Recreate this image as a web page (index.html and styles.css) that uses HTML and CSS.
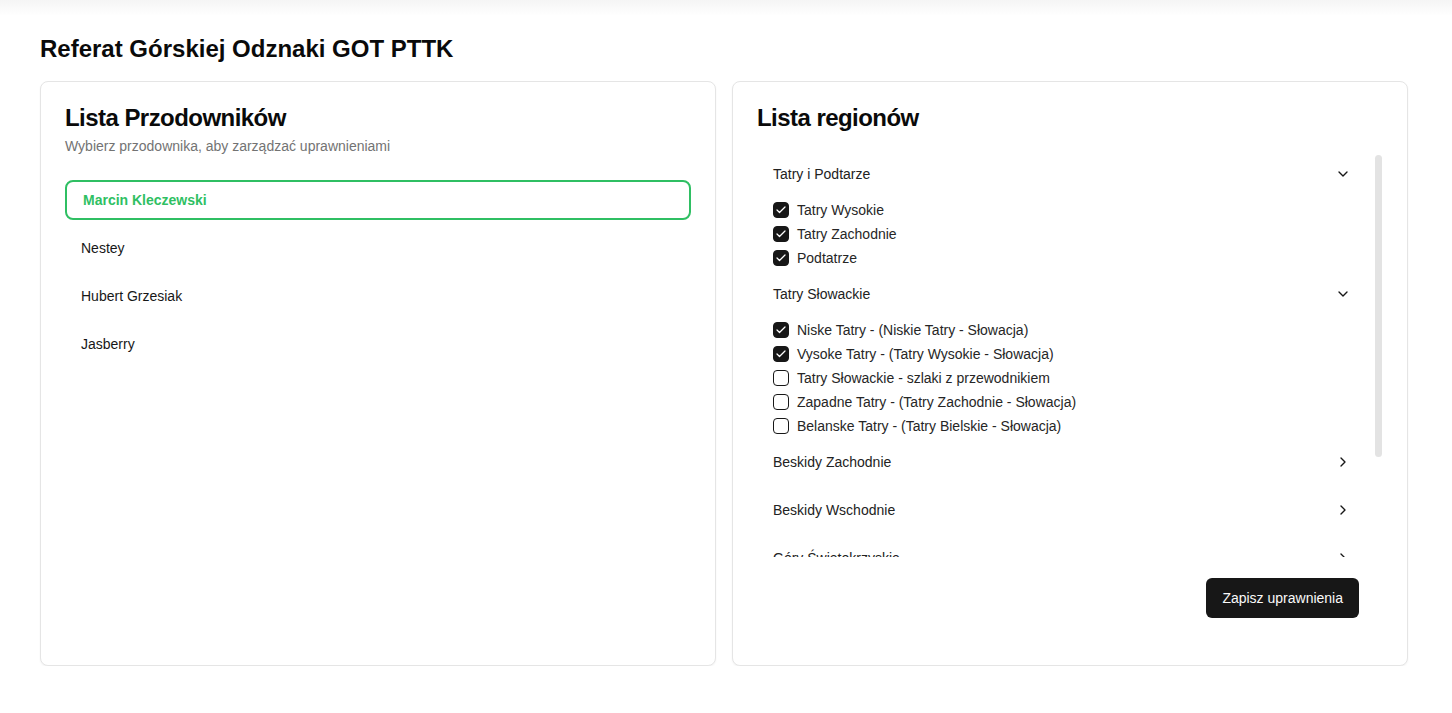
FILE: index.html
```html
<!DOCTYPE html>
<html lang="pl">
<head>
<meta charset="utf-8">
<title>Referat Górskiej Odznaki GOT PTTK</title>
<link rel="stylesheet" href="styles.css">
</head>
<body>
<div class="topbar"></div>
<main class="page">
  <h1 class="page-title">Referat Górskiej Odznaki GOT PTTK</h1>
  <div class="grid">
    <section class="card">
      <div class="card-header">
        <h2 class="card-title">Lista Przodowników</h2>
        <p class="card-desc">Wybierz przodownika, aby zarządzać uprawnieniami</p>
      </div>
      <div class="card-content">
        <ul class="guide-list">
          <li class="guide selected">Marcin Kleczewski</li>
          <li class="guide">Nestey</li>
          <li class="guide">Hubert Grzesiak</li>
          <li class="guide">Jasberry</li>
        </ul>
      </div>
    </section>
    <section class="card">
      <div class="card-header regions-header">
        <h2 class="card-title">Lista regionów</h2>
      </div>
      <div class="card-content regions-content">
        <div class="scroll">
          <div class="acc-list">
            <div class="acc-item">
              <div class="acc-head"><span>Tatry i Podtarze</span>
                <svg class="chev" viewBox="0 0 24 24"><path d="m6 9 6 6 6-6"/></svg></div>
              <div class="acc-body">
                <label class="row"><span class="cb checked"><svg viewBox="0 0 24 24"><path d="M20 6 9 17l-5-5"/></svg></span>Tatry Wysokie</label>
                <label class="row"><span class="cb checked"><svg viewBox="0 0 24 24"><path d="M20 6 9 17l-5-5"/></svg></span>Tatry Zachodnie</label>
                <label class="row"><span class="cb checked"><svg viewBox="0 0 24 24"><path d="M20 6 9 17l-5-5"/></svg></span>Podtatrze</label>
              </div>
            </div>
            <div class="acc-item">
              <div class="acc-head"><span>Tatry Słowackie</span>
                <svg class="chev" viewBox="0 0 24 24"><path d="m6 9 6 6 6-6"/></svg></div>
              <div class="acc-body">
                <label class="row"><span class="cb checked"><svg viewBox="0 0 24 24"><path d="M20 6 9 17l-5-5"/></svg></span>Niske Tatry - (Niskie Tatry - Słowacja)</label>
                <label class="row"><span class="cb checked"><svg viewBox="0 0 24 24"><path d="M20 6 9 17l-5-5"/></svg></span>Vysoke Tatry - (Tatry Wysokie - Słowacja)</label>
                <label class="row"><span class="cb"></span>Tatry Słowackie - szlaki z przewodnikiem</label>
                <label class="row"><span class="cb"></span>Zapadne Tatry - (Tatry Zachodnie - Słowacja)</label>
                <label class="row"><span class="cb"></span>Belanske Tatry - (Tatry Bielskie - Słowacja)</label>
              </div>
            </div>
            <div class="acc-item">
              <div class="acc-head"><span>Beskidy Zachodnie</span>
                <svg class="chev" viewBox="0 0 24 24"><path d="m9 18 6-6-6-6"/></svg></div>
            </div>
            <div class="acc-item">
              <div class="acc-head"><span>Beskidy Wschodnie</span>
                <svg class="chev" viewBox="0 0 24 24"><path d="m9 18 6-6-6-6"/></svg></div>
            </div>
            <div class="acc-item">
              <div class="acc-head"><span>Góry Świętokrzyskie</span>
                <svg class="chev" viewBox="0 0 24 24"><path d="m9 18 6-6-6-6"/></svg></div>
            </div>
          </div>
          <div class="thumb"></div>
        </div>
        <div class="footer">
          <button class="btn">Zapisz uprawnienia</button>
        </div>
      </div>
    </section>
  </div>
</main>
</body>
</html>
```

FILE: styles.css
```css
* { box-sizing: border-box; }

html, body {
  margin: 0;
  padding: 0;
  background: #ffffff;
}

body {
  font-family: "Liberation Sans", Arial, sans-serif;
  color: #171717;
  font-size: 14px;
}

.topbar {
  height: 16px;
  background: linear-gradient(#f5f5f5, #ffffff);
}

.page {
  padding: 17px 44px 0 40px;
}

.page-title {
  margin: 0 0 16px;
  font-size: 24px;
  line-height: 32px;
  font-weight: 700;
  color: #0a0a0a;
}

.grid {
  display: grid;
  grid-template-columns: 1fr 1fr;
  gap: 16px;
}

.card {
  height: 585px;
  border: 1px solid #e5e5e5;
  border-radius: 8px;
  background: #fff;
  box-shadow: 0 1px 2px rgba(0, 0, 0, 0.05);
  display: flex;
  flex-direction: column;
}

.card-header {
  padding: 24px 24px 24px;
  display: flex;
  flex-direction: column;
  gap: 6px;
}

.regions-header {
  padding-bottom: 20px;
}

.card-title {
  margin: 0;
  font-size: 24px;
  line-height: 24px;
  font-weight: 700;
  letter-spacing: -0.55px;
  color: #0a0a0a;
}

.card-desc {
  margin: 0;
  font-size: 14px;
  line-height: 20px;
  color: #737373;
}

.card-content {
  padding: 0 24px 24px;
}

.guide-list {
  list-style: none;
  margin: 0;
  padding: 0;
  display: flex;
  flex-direction: column;
  gap: 8px;
}

.guide {
  height: 40px;
  display: flex;
  align-items: center;
  padding: 0 16px;
  border-radius: 8px;
  font-size: 14px;
  color: #171717;
}

.guide.selected {
  border: 2px solid #2fbf63;
  color: #2fbf63;
  font-weight: 700;
}

.scroll {
  position: relative;
  height: 407px;
  overflow: hidden;
}

.thumb {
  position: absolute;
  top: 5px;
  right: 1px;
  width: 7px;
  height: 302px;
  background: #e3e3e3;
  border-radius: 4px;
}

.acc-list {
  padding: 0 16px 0 0;
}

.acc-head {
  height: 48px;
  display: flex;
  align-items: center;
  justify-content: space-between;
  padding: 0 16px;
  font-size: 14px;
  color: #222222;
}

.chev {
  width: 16px;
  height: 16px;
  fill: none;
  stroke: #171717;
  stroke-width: 2;
  stroke-linecap: round;
  stroke-linejoin: round;
}

.acc-body {
  padding: 0 16px;
}

.row {
  height: 24px;
  display: flex;
  align-items: center;
  gap: 8px;
  font-size: 14px;
  color: #262626;
}

.cb {
  width: 16px;
  height: 16px;
  border: 1px solid #171717;
  border-radius: 4px;
  display: flex;
  align-items: center;
  justify-content: center;
  flex: none;
}

.cb.checked {
  background: #171717;
}

.cb svg {
  width: 12px;
  height: 12px;
  fill: none;
  stroke: #ffffff;
  stroke-width: 2.5;
  stroke-linecap: round;
  stroke-linejoin: round;
}

.footer {
  display: flex;
  justify-content: flex-end;
  padding-right: 24px;
  margin-top: 21px;
}

.btn {
  height: 40px;
  padding: 0 16px;
  border: 0;
  border-radius: 6px;
  background: #171717;
  color: #fafafa;
  font-family: "Liberation Sans", Arial, sans-serif;
  font-size: 14px;
  font-weight: 500;
}
```
